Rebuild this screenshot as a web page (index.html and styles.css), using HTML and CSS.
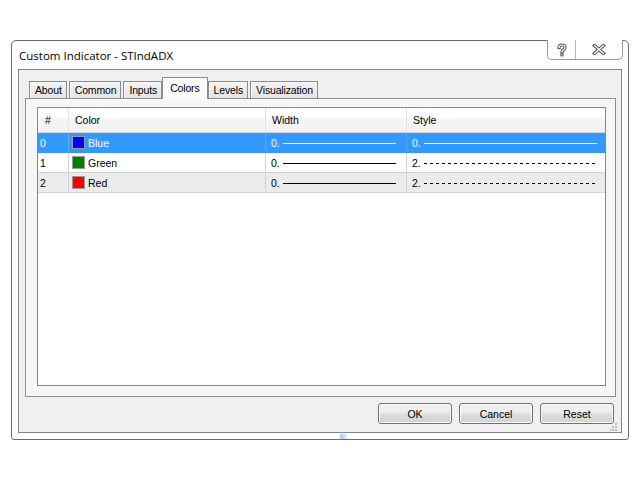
FILE: index.html
```html
<!DOCTYPE html>
<html>
<head>
<meta charset="utf-8">
<title>Custom Indicator - STIndADX</title>
<link rel="stylesheet" href="styles.css">
</head>
<body>
<div class="window">
  <div class="titlebar"><span class="title">Custom Indicator - STIndADX</span></div>
  <div class="caption-btns">
    <div class="cb help">
      <svg width="12" height="14" viewBox="0 0 12 14">
        <path d="M3 4.5 Q3 2 6 2 Q9 2 9 4.5 Q9 6 7.5 6.8 Q6 7.5 6 9" fill="none" stroke="#555" stroke-width="3.2" stroke-linecap="square"/>
        <rect x="4.4" y="10.2" width="3.2" height="3.2" fill="#555"/>
        <path d="M3 4.5 Q3 2 6 2 Q9 2 9 4.5 Q9 6 7.5 6.8 Q6 7.5 6 9" fill="none" stroke="#fff" stroke-width="1.2" stroke-linecap="square"/>
        <rect x="5.4" y="11.2" width="1.2" height="1.2" fill="#fff"/>
      </svg>
    </div>
    <div class="cb close">
      <svg width="14" height="11" viewBox="0 0 14 11">
        <path d="M2.5 1.5 L11.5 9.5 M11.5 1.5 L2.5 9.5" stroke="#555" stroke-width="3.4" stroke-linecap="square"/>
        <path d="M2.5 1.5 L11.5 9.5 M11.5 1.5 L2.5 9.5" stroke="#fff" stroke-width="1.3" stroke-linecap="square"/>
      </svg>
    </div>
  </div>
  <div class="frame">
    <div class="tabs">
      <div class="tab">About</div>
      <div class="tab">Common</div>
      <div class="tab">Inputs</div>
      <div class="tab sel">Colors</div>
      <div class="tab">Levels</div>
      <div class="tab">Visualization</div>
    </div>
    <div class="panel">
      <div class="list">
        <div class="row head">
          <div class="c c1">#</div>
          <div class="c c2">Color</div>
          <div class="c c3">Width</div>
          <div class="c c4">Style</div>
        </div>
        <div class="row selrow">
          <div class="c c1">0</div>
          <div class="c c2"><span class="sw blue"></span>Blue</div>
          <div class="c c3">0.<span class="ln solid"></span></div>
          <div class="c c4">0.<span class="ln solid"></span></div>
        </div>
        <div class="row">
          <div class="c c1">1</div>
          <div class="c c2"><span class="sw green"></span>Green</div>
          <div class="c c3">0.<span class="ln solid"></span></div>
          <div class="c c4">2.<span class="ln dash"></span></div>
        </div>
        <div class="row alt">
          <div class="c c1">2</div>
          <div class="c c2"><span class="sw red"></span>Red</div>
          <div class="c c3">0.<span class="ln solid"></span></div>
          <div class="c c4">2.<span class="ln dash"></span></div>
        </div>
      </div>
    </div>
    <div class="buttons">
      <div class="btn">OK</div>
      <div class="btn">Cancel</div>
      <div class="btn">Reset</div>
    </div>
    <svg class="grip" width="8" height="9" viewBox="0 0 8 9">
      <rect x="6" y="1" width="2" height="2" fill="#fff"/>
      <rect x="3" y="4" width="2" height="2" fill="#fff"/>
      <rect x="6" y="4" width="2" height="2" fill="#fff"/>
      <rect x="0" y="7" width="2" height="2" fill="#fff"/>
      <rect x="3" y="7" width="2" height="2" fill="#fff"/>
      <rect x="6" y="7" width="2" height="2" fill="#fff"/>
      <rect x="5" y="0" width="2" height="2" fill="#b5b5b5"/>
      <rect x="2" y="3" width="2" height="2" fill="#b5b5b5"/>
      <rect x="5" y="3" width="2" height="2" fill="#b5b5b5"/>
      <rect x="-1" y="6" width="2" height="2" fill="#b5b5b5"/>
      <rect x="2" y="6" width="2" height="2" fill="#b5b5b5"/>
      <rect x="5" y="6" width="2" height="2" fill="#b5b5b5"/>
    </svg>
  </div>
  <span class="smudge"></span>
</div>
</body>
</html>
```

FILE: styles.css
```css
body {
  margin: 0;
  background: #fff;
  font-family: "Liberation Sans", Arial, sans-serif;
  font-size: 10.5px;
  color: #000;
}

.window {
  position: relative;
  box-sizing: border-box;
  width: 618px;
  height: 400px;
  margin: 40px 0 0 11px;
  border: 1px solid #6b6b6b;
  border-radius: 5px 5px 3px 3px;
  background: #fff;
  display: flex;
  flex-direction: column;
}

.titlebar {
  height: 28px;
  display: flex;
  align-items: center;
  padding-left: 7px;
  font-family: "Open Sans", "Noto Sans", sans-serif;
  font-size: 11.5px;
}

.caption-btns {
  position: absolute;
  top: -1px;
  right: 5px;
  display: flex;
  height: 19px;
  border: 1px solid #9a9a9a;
  border-top: none;
  border-radius: 0 0 5px 5px;
  background: #fff;
}

.cb {
  display: flex;
  align-items: center;
  justify-content: center;
  height: 19px;
}

.help {
  width: 27px;
  border-right: 1px solid #b4b4b4;
}

.close {
  width: 46px;
}

.frame {
  position: relative;
  box-sizing: border-box;
  height: 364px;
  margin: 0 6px 6px;
  border: 1px solid #858585;
  background: #f0f0f0;
  padding: 7px 5px 8px 6px;
  display: flex;
  flex-direction: column;
}

.tabs {
  position: relative;
  z-index: 1;
  display: flex;
  align-items: flex-end;
  height: 21px;
  padding-left: 4px;
}

.tab {
  box-sizing: border-box;
  height: 17px;
  padding: 0 4px 0 5px;
  margin-right: 2px;
  border: 1px solid #898c95;
  border-bottom: none;
  background: linear-gradient(#f4f4f4, #e4e4e4);
  box-shadow: inset 1px 1px 0 #fbfbfb;
  display: flex;
  align-items: center;
  white-space: nowrap;
  letter-spacing: -0.15px;
}

.tab.sel {
  height: 22px;
  margin: 0 0 -1px -2px;
  padding: 0 7px 2px;
  background: #fafafa;
  box-shadow: none;
}

.panel {
  box-sizing: border-box;
  height: 299px;
  border: 1px solid #898c95;
  background: #f6f6f6;
  box-shadow: inset 1px 1px 0 #fff;
  padding: 8px 9px 10px 11px;
}

.list {
  box-sizing: border-box;
  height: 279px;
  border: 1px solid #828790;
  background: #fff;
}

.row {
  display: flex;
  box-sizing: border-box;
  height: 20px;
  border-bottom: 1px solid #d2d2d2;
}

.row.head {
  height: 25px;
  border-bottom: 1px solid #d5d5d5;
  background: linear-gradient(#ffffff 0, #ffffff 40%, #f5f5f6 45%, #f1f2f3 100%);
}

.row.selrow {
  background: #3399ff;
  color: #fff;
  border-bottom-color: #3399ff;
}

.row.alt {
  background: #ebebeb;
}

.c {
  box-sizing: border-box;
  display: flex;
  align-items: center;
  border-right: 1px solid #d2d2d2;
  white-space: nowrap;
}

.head .c {
  border-right-color: #e2e3e5;
  padding-left: 6px;
}

.selrow .c {
  border-right-color: #5aaaf7;
}

.c1 { width: 31px; padding-left: 2px; }
.c2 { width: 197px; padding-left: 3px; }
.c3 { width: 141px; padding-left: 5px; padding-right: 10px; }
.c4 { flex: 1; padding-left: 5px; padding-right: 8px; border-right: none; }

.head .c1 { padding-left: 7px; }

.sw {
  box-sizing: border-box;
  width: 13px;
  height: 13px;
  border: 1px solid #9a9a9a;
  margin-right: 3px;
}
.sw.blue { background: #0000ff; }
.sw.green { background: #008000; }
.sw.red { background: #ff0000; }

.ln {
  flex: 1;
  height: 1px;
  margin-left: 3px;
  margin-top: 1px;
}
.ln.solid { background: #000; }
.selrow .ln.solid { background: #fff; }
.ln.dash {
  background: repeating-linear-gradient(to right, #000 0, #000 3px, transparent 3px, transparent 6px);
}

.buttons {
  display: flex;
  justify-content: flex-end;
  gap: 7px;
  margin-top: 6px;
  padding-right: 2px;
}

.btn {
  box-sizing: border-box;
  width: 74px;
  height: 21px;
  border: 1px solid #707070;
  border-radius: 3px;
  background: linear-gradient(#f2f2f2 0, #ebebeb 48%, #dddddd 52%, #d3d3d3 100%);
  box-shadow: inset 0 0 0 1px #fbfbfb;
  display: flex;
  align-items: center;
  justify-content: center;
}

.grip {
  position: absolute;
  right: 3px;
  bottom: 0;
}

.smudge {
  position: absolute;
  left: 328px;
  top: 393px;
  width: 7px;
  height: 5px;
  background: linear-gradient(to right, #a8c6ee, #e8f0fb);
}
```
